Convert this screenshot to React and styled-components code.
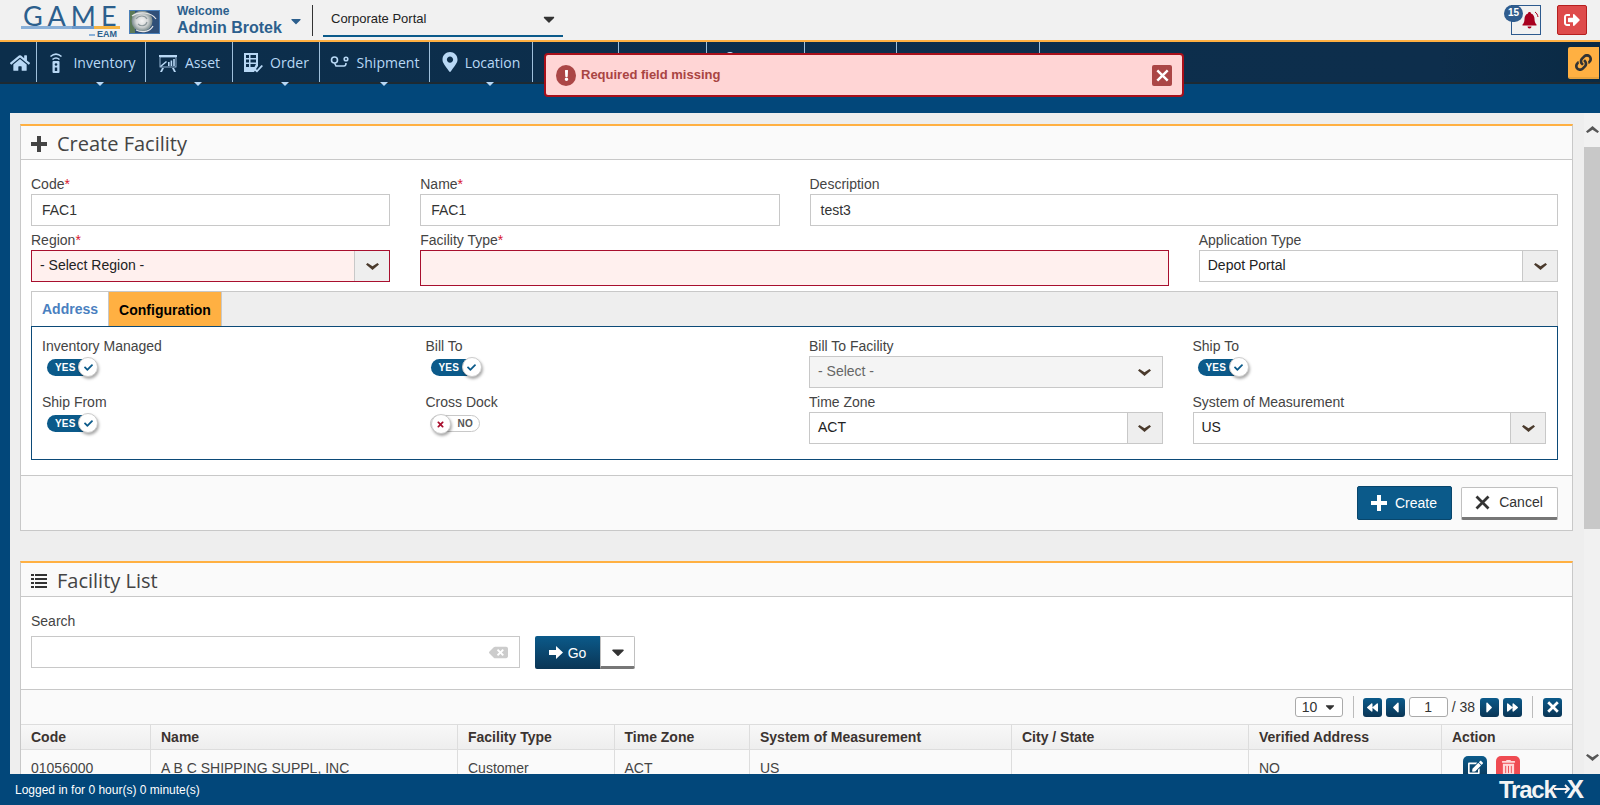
import React from 'react'
import styled, { createGlobalStyle } from 'styled-components'
import {
  FaHome, FaCaretDown, FaSignOutAlt, FaLink, FaMapMarkerAlt, FaBackspace, FaBackward, FaForward,
  FaCaretLeft, FaCaretRight, FaEdit, FaTrashAlt, FaExclamation, FaCheck, FaTimes, FaCog, FaUser, FaChartBar, FaFolder
} from 'react-icons/fa'

const Global = createGlobalStyle`
  html, body { margin: 0; padding: 0; height: 100%; overflow: hidden; }
  body { font-family: "Liberation Sans", Arial, sans-serif; font-size: 14px; color: #444; }
  * { box-sizing: border-box; }
`

const Page = styled.div`
  position: relative;
  height: 100vh;
  display: flex;
  flex-direction: column;
  overflow: hidden;
  background: #eee;
`

const TopBar = styled.header`
  height: 42px;
  flex: none;
  display: flex;
  align-items: flex-start;
  background: #f1f1f1;
  border-bottom: 2px solid #ffb042;
`

const Logo = styled.div`
  width: 103px;
  margin: 3px 0 0 21px;
  flex: none;
`

const LogoWord = styled.div`
  font-family: Lato, sans-serif;
  font-size: 27px;
  line-height: 21px;
  height: 23px;
  padding: 2px 0 0 2px;
  letter-spacing: 5px;
  color: #2c5f8d;
  white-space: nowrap;
`

const LogoRule = styled.div`
  height: 3px;
  width: 99px;
  background: linear-gradient(90deg, #8ab0d8 0 52%, #6f9bcc 52% 74%, #f5b342 74% 100%);
`

const LogoSub = styled.div`
  display: flex;
  align-items: center;
  justify-content: flex-end;
  gap: 2px;
  font-size: 9px;
  line-height: 9px;
  font-weight: 700;
  color: #2c5f8d;
  margin-top: 1px;
  padding-right: 7px;
  &::before {
    content: '';
    width: 6px;
    height: 2px;
    background: #8ab0d8;
  }
`

const StormPic = styled.svg`
  width: 31px;
  height: 24px;
  margin: 10px 0 0 5px;
  flex: none;
  border: 1px solid #4a7fb8;
`

const Welcome = styled.div`
  margin: 4px 0 0 17px;
  width: 104px;
  flex: none;
  color: #2c5f8d;
  font-weight: 700;
`

const WelcomeSmall = styled.div`
  font-size: 12px;
  line-height: 14px;
`

const WelcomeName = styled.div`
  font-size: 16px;
  line-height: 19px;
  white-space: nowrap;
`

const TinyCaret = styled(FaCaretDown)`
  flex: none;
  margin: 13px 0 0 7px;
  font-size: 16px;
  color: #2c5f8d;
`

const TopDivider = styled.div`
  width: 1px;
  height: 31px;
  margin: 5px 0 0 8px;
  flex: none;
  background: #333;
`

const PortalSelect = styled.div`
  width: 240px;
  height: 32px;
  margin: 5px 0 0 10px;
  flex: none;
  display: flex;
  align-items: center;
  justify-content: space-between;
  padding: 0 5px 3px 8px;
  font-size: 13px;
  color: #222;
  border-bottom: 2px solid #0b5a8a;
`

const TopRight = styled.div`
  margin-left: auto;
  margin-right: 13px;
  display: flex;
  gap: 16px;
  padding-top: 5px;
`

const BellBox = styled.div`
  position: relative;
  width: 30px;
  height: 30px;
  display: flex;
  align-items: center;
  justify-content: center;
  border: 1px solid #2d5a8e;
  color: #a8001f;
  padding-left: 6px;
`

const BellBadge = styled.span`
  position: absolute;
  left: -8px;
  top: -1px;
  width: 19px;
  height: 17px;
  border-radius: 9px;
  background: #2f5c8e;
  color: #fff;
  font-size: 10px;
  font-weight: 700;
  line-height: 16px;
  text-align: center;
`

const LogoutBtn = styled.div`
  width: 30px;
  height: 30px;
  display: flex;
  align-items: center;
  justify-content: center;
  background: #de4b4b;
  border: 1px solid #b51f1f;
  border-radius: 2px;
  color: #fff;
  font-size: 16px;
`

const Nav = styled.nav`
  height: 42px;
  flex: none;
  display: flex;
  background: linear-gradient(90deg, #0c2e4b 0%, #0d2e4c 90%, #0a2a44 100%);
  border-bottom: 2px solid #1d2a33;
`

const NavItem = styled.div`
  position: relative;
  width: ${p => p.$w}px;
  flex: none;
  display: flex;
  align-items: flex-start;
  justify-content: ${p => (p.$left ? 'flex-start' : 'center')};
  gap: 7px;
  padding: ${p => (p.$left ? '10px 0 0 13px' : p.$home ? '10px 0 0 4px' : '10px 0 0')};
  border-right: 1px solid #9fc0dc;
  font-family: "Open Sans", sans-serif;
  font-size: 14px;
  line-height: 22px;
  color: #b8d8f5;
  svg { flex: none; height: 22px; width: 20px; }
`

const PinIcon = styled(FaMapMarkerAlt)`
  && { height: 20px; width: 16px; }
`

const NavCaret = styled.span`
  position: absolute;
  left: calc(50% + 5px);
  top: 40px;
  border-left: 4px solid transparent;
  border-right: 4px solid transparent;
  border-top: 4px solid #b8d8f5;
`

const LinkBtn = styled.div`
  margin: 5px 1px 0 auto;
  width: 31px;
  height: 32px;
  display: flex;
  align-items: center;
  justify-content: center;
  background: #ffb042;
  border-bottom: 2px solid #e8a23c;
  border-radius: 2px 0 0 2px;
  color: #333;
  font-size: 17px;
`

const Band = styled.div`
  height: 29px;
  flex: none;
  padding-left: 738px;
  background: #02477a;
`

const BandNotch = styled.div`
  width: 52px;
  height: 1px;
  margin-top: 12px;
  background: #a85a10;
`

const Toast = styled.div`
  position: absolute;
  left: 544px;
  top: 53px;
  width: 640px;
  height: 44px;
  display: flex;
  align-items: center;
  gap: 5px;
  padding: 0 10px;
  background: #ffd5d5;
  border: 2px solid #a80f1a;
  border-radius: 4px;
  color: #a94442;
  font-size: 13px;
  font-weight: 700;
`

const ToastText = styled.span`
  margin-top: -2px;
`

const ToastIcon = styled.span`
  width: 20px;
  height: 21px;
  display: flex;
  align-items: center;
  justify-content: center;
  border-radius: 50%;
  background: #ab4646;
  color: #fff;
  font-size: 11px;
`

const ToastClose = styled.span`
  margin-left: auto;
  width: 20px;
  height: 21px;
  display: flex;
  align-items: center;
  justify-content: center;
  border-radius: 2px;
  background: #ab4646;
  color: #fff;
`

const Main = styled.main`
  flex: 1;
  min-height: 0;
  display: flex;
  border-left: 10px solid #02477a;
`

const Scroller = styled.div`
  flex: 1;
  min-width: 0;
  padding: 11px 11px 0 10px;
  overflow: hidden;
`

const Scrollbar = styled.div`
  width: 16px;
  flex: none;
  display: flex;
  flex-direction: column;
  align-items: center;
  background: #f1f1f1;
  color: #555;
`

const ScrollArrow = styled.div`
  height: 34px;
  display: flex;
  align-items: center;
  justify-content: center;
  transform: ${p => (p.$up ? 'rotate(180deg)' : 'none')};
`

const ScrollThumb = styled.div`
  width: 16px;
  height: 382px;
  background: #c8c8c8;
  margin-bottom: auto;
`

const Panel = styled.section`
  background: #fff;
  border: 1px solid #c8c8c8;
  border-top: 2px solid #ffb042;
  margin-bottom: 30px;
`

const PanelHead = styled.div`
  height: 34px;
  display: flex;
  align-items: center;
  gap: 10px;
  padding: 2px 0 0 10px;
  background: #fafafa;
  border-bottom: 1px solid #c8c8c8;
  font-family: "Open Sans", sans-serif;
  font-size: 20px;
  color: #444;
`

const FormBody = styled.div`
  padding: 15px 14px 15px 10px;
`

const Grid = styled.div`
  display: grid;
  grid-template-columns: repeat(4, 1fr);
  column-gap: 30px;
  row-gap: 5px;
`

const Field = styled.div`
  grid-column: span ${p => p.$span || 1};
  min-width: 0;
`

const Label = styled.div`
  height: 19px;
  line-height: 18px;
  font-size: 14px;
  color: #444;
  white-space: nowrap;
`

const Req = styled.span`
  color: #d8172e;
`

const TextBox = styled.div`
  height: ${p => p.$h || 32}px;
  display: flex;
  align-items: center;
  padding-left: 10px;
  font-size: 14px;
  color: #333;
  background: ${p => (p.$error ? '#fff0ee' : '#fff')};
  border: 1px solid ${p => (p.$error ? '#a80f2e' : '#c8c8c8')};
`

const SelectBox = styled.div`
  height: 32px;
  display: flex;
  align-items: stretch;
  font-size: 14px;
  color: ${p => (p.$disabled ? '#666' : '#222')};
  background: ${p => (p.$error ? '#fff0ee' : p.$disabled ? '#f4f4f4' : '#fff')};
  border: 1px solid ${p => (p.$error ? '#a80f2e' : '#c8c8c8')};
`

const SelectValue = styled.div`
  flex: 1;
  display: flex;
  align-items: center;
  padding: 0 0 2px ${p => p.$pad || 8}px;
`

const SelectArrow = styled.div`
  width: 35px;
  flex: none;
  display: flex;
  align-items: center;
  justify-content: center;
  color: #4a3a2c;
  background: ${p => (p.$plain ? 'transparent' : '#eee')};
  border-left: ${p => (p.$plain ? 'none' : '1px solid #c8c8c8')};
`

const TabStrip = styled.div`
  margin-top: 5px;
  height: 35px;
  display: flex;
  background: #eee;
  border: 1px solid #c8c8c8;
  border-bottom: none;
`

const Tab = styled.div`
  width: ${p => p.$w}px;
  display: flex;
  align-items: center;
  justify-content: center;
  padding-top: ${p => (p.$active ? 2 : 0)}px;
  font-weight: 700;
  font-size: 14px;
  color: ${p => (p.$active ? '#000' : '#4a80c0')};
  background: ${p => (p.$active ? '#ffb042' : '#fff')};
  border-right: 1px solid #c8c8c8;
`

const TabBody = styled.div`
  padding: 10px 11px 15px 10px;
  border: 1px solid #0c4a78;
`

const Toggle = styled.div`
  position: relative;
  width: ${p => (p.$on ? 46 : 50)}px;
  height: 17px;
  margin: 3px 0 0 ${p => (p.$on ? 5 : 4)}px;
  display: flex;
  align-items: center;
  padding: ${p => (p.$on ? '0 0 0 8px' : '0 0 0 27px')};
  border-radius: 9px;
  background: ${p => (p.$on ? '#0b5a8a' : '#fff')};
  border: ${p => (p.$on ? 'none' : '1px solid #c8c8c8')};
  color: ${p => (p.$on ? '#fff' : '#555')};
  font-size: 10px;
  font-weight: 700;
  letter-spacing: 0.2px;
`

const ToggleKnob = styled.span`
  position: absolute;
  top: -2px;
  ${p => (p.$on ? 'right: -5px;' : 'left: 0;')}
  width: 20px;
  height: 20px;
  display: flex;
  align-items: center;
  justify-content: center;
  border-radius: 50%;
  background: #fff;
  border: 1px solid #ccc;
  box-shadow: 1px 2px 3px rgba(0, 0, 0, 0.35);
  font-size: 9px;
  color: ${p => (p.$on ? '#0b5a8a' : '#a80f2e')};
`

const PanelFoot = styled.div`
  height: 55px;
  display: flex;
  align-items: center;
  justify-content: flex-end;
  gap: 9px;
  padding-right: 14px;
  background: #fafafa;
  border-top: 1px solid #c8c8c8;
`

const PrimaryBtn = styled.div`
  width: 95px;
  height: 34px;
  display: flex;
  align-items: center;
  justify-content: center;
  gap: 8px;
  padding-right: 1px;
  background: #0b5a8a;
  border: 1px solid #08466c;
  border-radius: 2px;
  color: #fff;
  font-size: 14px;
`

const CancelBtn = styled.div`
  width: 97px;
  height: 33px;
  display: flex;
  align-items: center;
  justify-content: center;
  gap: 9px;
  padding-right: 1px;
  background: #fff;
  border: 1px solid #c0c0c0;
  border-bottom: 3px solid #777;
  border-radius: 2px;
  color: #333;
  font-size: 14px;
`

const SearchBody = styled.div`
  height: 93px;
  padding: 15px 0 0 10px;
  border-bottom: 1px solid #c8c8c8;
`

const SearchLabel = styled(Label)`
  height: 24px;
`

const SearchRow = styled.div`
  display: flex;
  gap: 15px;
`

const SearchBox = styled.div`
  width: 489px;
  height: 32px;
  display: flex;
  align-items: center;
  justify-content: flex-end;
  padding-right: 11px;
  border: 1px solid #c8c8c8;
  color: #ccc;
  font-size: 19px;
`

const GoGroup = styled.div`
  display: flex;
  height: 33px;
  border-radius: 2px;
  overflow: hidden;
`

const GoBtn = styled.div`
  width: 65px;
  display: flex;
  align-items: center;
  justify-content: center;
  gap: 5px;
  background: linear-gradient(180deg, #0b5a8a 0%, #0a3555 100%);
  color: #fff;
  font-size: 14px;
`

const GoCaret = styled.div`
  width: 35px;
  display: flex;
  align-items: center;
  justify-content: center;
  background: #fff;
  border: 1px solid #c0c0c0;
  border-bottom: 3px solid #777;
  color: #333;
  font-size: 20px;
`

const Pager = styled.div`
  height: 34px;
  display: flex;
  align-items: center;
  justify-content: flex-end;
  padding-right: 10px;
  background: #fafafa;
`

const PageSize = styled.div`
  width: 48px;
  height: 20px;
  display: flex;
  align-items: center;
  justify-content: space-between;
  padding: 0 5px 0 6px;
  background: #fff;
  border: 1px solid #aaa;
  border-radius: 3px;
  font-size: 14px;
  color: #333;
`

const PagerRule = styled.div`
  width: 1px;
  height: 22px;
  margin: ${p => p.$m || '0 9px 0 10px'};
  background: #bbb;
`

const PagerBtn = styled.div`
  width: 19px;
  height: 19px;
  margin-right: ${p => p.$mr ?? 4}px;
  display: flex;
  align-items: center;
  justify-content: center;
  background: linear-gradient(180deg, #0b5a8a 0%, #0a3555 100%);
  border-radius: 3px;
  color: #fff;
  font-size: ${p => p.$fs || 11}px;
`

const PageInput = styled.div`
  width: 39px;
  height: 20px;
  margin-right: 4px;
  line-height: 18px;
  text-align: center;
  background: #fff;
  border: 1px solid #aaa;
  border-radius: 3px;
  font-size: 14px;
  color: #333;
`

const PageTotal = styled.span`
  margin-right: 5px;
  font-size: 14px;
  color: #333;
`

const TableRow = styled.div`
  display: grid;
  grid-template-columns: 130px 307px 156.5px 135.5px 262px 237px 193px 1fr;
  height: ${p => (p.$head ? 26 : 36)}px;
  background: ${p => (p.$head ? 'linear-gradient(180deg, #f8f8f8, #eee)' : '#fafafa')};
  border-top: ${p => (p.$head ? '1px solid #ddd' : 'none')};
  border-bottom: 1px solid #ddd;
`

const Cell = styled.div`
  display: flex;
  align-items: center;
  gap: 9px;
  padding-left: ${p => p.$pad || 10}px;
  font-size: 14px;
  font-weight: ${p => (p.$head ? 700 : 400)};
  color: ${p => (p.$head ? '#3b3330' : '#444')};
  border-right: 1px solid #ddd;
  white-space: nowrap;
  &:last-child { border-right: none; }
`

const RowBtn = styled.div`
  width: 24px;
  height: 24px;
  display: flex;
  align-items: center;
  justify-content: center;
  border-radius: 5px;
  font-size: 15px;
  color: ${p => (p.$danger ? '#ffd8d8' : '#fff')};
  background: ${p => (p.$danger ? '#ef4b52' : 'linear-gradient(180deg, #0b5a8a, #0a3555)')};
`

const Footer = styled.footer`
  height: 31px;
  flex: none;
  display: flex;
  align-items: center;
  justify-content: space-between;
  padding: 0 16px 0 15px;
  background: #02477a;
  color: #fff;
  font-size: 12px;
`

const TrackLogo = styled.div`
  display: flex;
  align-items: center;
  font-size: 24px;
  font-weight: 700;
  letter-spacing: -1.2px;
  color: #f4f4f4;
`

const TrackX = styled.span`
  position: relative;
  margin-left: 11px;
  font-size: 26px;
  letter-spacing: 0;
`

const TrackArrow = styled.svg`
  position: absolute;
  left: -13px;
  top: 10px;
  width: 17px;
  height: 10px;
`

const Chevron = () => (
  <svg width="13" height="7" viewBox="0 0 13 7" fill="currentColor">
    <path d="M0 1.500L1.500 0l5 3.200L11.500 0 13 1.500 6.500 7z" />
  </svg>
)

const Plus = ({ size = 16 }) => (
  <svg width={size} height={size} viewBox="0 0 16 16" fill="currentColor">
    <path d="M6 0h4v6h6v4h-6v6H6v-6H0V6h6z" />
  </svg>
)

const Cross = ({ size = 15, weight = 2.8 }) => (
  <svg width={size} height={size} viewBox="0 0 15 15" fill="none" stroke="currentColor" strokeWidth={weight}>
    <path d="M1.500 1.500l12 12M13.500 1.500l-12 12" />
  </svg>
)

const BlockArrow = () => (
  <svg width="14" height="13" viewBox="0 0 14 13" fill="currentColor">
    <path d="M0 4h7V0l7 6.500L7 13V9H0z" />
  </svg>
)

const ListIcon = () => (
  <svg width="16" height="14" viewBox="0 0 16 14" fill="#333">
    <path d="M0 0h3v2H0zM4 0h12v2H4zM0 4h3v2H0zM4 4h12v2H4zM0 8h3v2H0zM4 8h12v2H4zM0 12h3v2H0zM4 12h12v2H4z" />
  </svg>
)

const BellIcon = () => (
  <svg width="21" height="20" viewBox="0 0 21 20">
    <path fill="currentColor" d="M10.500 2c-.9 0-1.500.6-1.500 1.400C6.500 4.200 5.500 6.500 5.500 9c0 3-1 4.500-2 5.500v1h14v-1c-1-1-2-2.500-2-5.500 0-2.500-1-4.800-3.500-5.600C12 2.600 11.400 2 10.500 2zM8.500 16.500a2 2 0 004 0z" />
    <path fill="none" stroke="currentColor" d="M16 2c1.500 1 2.500 2.500 3 5" />
  </svg>
)

const InventoryIcon = () => (
  <svg viewBox="0 0 20 22" fill="none" stroke="currentColor">
    <path d="M4.500 4.500C8 1.500 12 1.500 15.500 4.500" strokeWidth="1.600" />
    <path d="M6.500 7.500C8.500 5.800 11.500 5.800 13.500 7.500" strokeWidth="1.600" />
    <rect x="6.500" y="9" width="7" height="12" rx="1" fill="currentColor" stroke="none" />
    <circle cx="10" cy="12.500" r="1.300" fill="#0d2e4c" stroke="none" />
    <rect x="8.800" y="15.500" width="2.400" height="3.500" fill="#0d2e4c" stroke="none" />
  </svg>
)

const AssetIcon = () => (
  <svg viewBox="0 0 20 22" fill="currentColor">
    <rect x="1" y="3" width="18" height="2" />
    <rect x="2" y="5" width="16" height="10" fill="none" stroke="currentColor" strokeWidth="0.8" />
    <rect x="10" y="10" width="1.600" height="4" />
    <rect x="12.600" y="8.500" width="1.600" height="5.500" />
    <rect x="15.200" y="7" width="1.600" height="7" />
    <path d="M2 14L8 9l1 1-6 5zM4 16h2l-2 4H2zM14 16h2l2 4h-2z" />
  </svg>
)

const OrderIcon = () => (
  <svg viewBox="0 0 20 22" fill="currentColor">
    <path d="M1 1h14v13l-4 6H1zM3 3v3h3V3zm4.500 0v3H13V3zM3 7.500v3h3v-3zm4.500 0v3H13v-3zM3 12v3h3v-3zm4.500 0v3h4l1.500-3z" fillRule="evenodd" />
    <path d="M11 18l1.500-1.500 1.500 1.500 4.500-5 1.500 1-6 6.500z" />
  </svg>
)

const ShipmentIcon = () => (
  <svg viewBox="0 0 20 22" fill="none" stroke="currentColor" strokeWidth="1.600">
    <circle cx="4.500" cy="8" r="3" />
    <path d="M4.500 11l1.500 3h8c1.500 0 2-1 2-3" />
    <circle cx="16" cy="7" r="1.800" />
  </svg>
)

const StormImage = () => (
  <StormPic viewBox="0 0 29 22">
    <defs>
      <radialGradient id="storm" cx="50%" cy="50%">
        <stop offset="0%" stopColor="#f4f4f4" />
        <stop offset="55%" stopColor="#d6d8d8" />
        <stop offset="100%" stopColor="#77888a" />
      </radialGradient>
    </defs>
    <rect width="29" height="22" fill="#2f4f78" />
    <rect width="5" height="22" fill="#5c7a56" />
    <circle cx="12" cy="10" r="10.500" fill="url(#storm)" />
    <path d="M6 8c3-4 9-4 11 0M8 13c3 3 8 2 9-2" fill="none" stroke="#8e9a9e" strokeWidth="1.200" />
    <path d="M2 5C9 0 21 1 26 8M6 19c6 3 14 2 17-4" fill="none" stroke="#e6e6e6" strokeWidth="1.200" />
  </StormPic>
)

const navItems = [
  { label: 'Inventory', w: 109, icon: <InventoryIcon /> },
  { label: 'Asset', w: 87, icon: <AssetIcon /> },
  { label: 'Order', w: 87, icon: <OrderIcon /> },
  { label: 'Shipment', w: 110, icon: <ShipmentIcon /> },
  { label: 'Location', w: 103, icon: <PinIcon /> }
]

// mostly hidden behind the toast, only the tips of the icons show
const hiddenNav = [
  { w: 86, icon: <FaChartBar /> },
  { w: 88, icon: <FaCog /> },
  { w: 98, icon: <FaUser /> },
  { w: 92, icon: <FaFolder /> },
  { w: 143, icon: null }
]

const tableHead = ['Code', 'Name', 'Facility Type', 'Time Zone', 'System of Measurement', 'City / State', 'Verified Address', 'Action']
const tableRow = ['01056000', 'A B C SHIPPING SUPPL, INC', 'Customer', 'ACT', 'US', '', 'NO']

const Switch = ({ on }) => (
  <Toggle $on={on}>
    {on ? 'YES' : 'NO'}
    <ToggleKnob $on={on}>{on ? <FaCheck /> : <FaTimes />}</ToggleKnob>
  </Toggle>
)

const Select = ({ value, error, pad }) => (
  <SelectBox $error={error}>
    <SelectValue $pad={pad}>{value}</SelectValue>
    <SelectArrow><Chevron /></SelectArrow>
  </SelectBox>
)

export default function App() {
  return (
    <Page>
      <Global />
      <TopBar>
        <Logo>
          <LogoWord>GAME</LogoWord>
          <LogoRule />
          <LogoSub>EAM</LogoSub>
        </Logo>
        <StormImage />
        <Welcome>
          <WelcomeSmall>Welcome</WelcomeSmall>
          <WelcomeName>Admin Brotek</WelcomeName>
        </Welcome>
        <TinyCaret />
        <TopDivider />
        <PortalSelect>
          Corporate Portal
          <FaCaretDown color="#333" size={18} />
        </PortalSelect>
        <TopRight>
          <BellBox>
            <BellBadge>15</BellBadge>
            <BellIcon />
          </BellBox>
          <LogoutBtn><FaSignOutAlt /></LogoutBtn>
        </TopRight>
      </TopBar>

      <Nav>
        <NavItem $w={37} $home><FaHome /></NavItem>
        {navItems.map(item => (
          <NavItem key={item.label} $w={item.w}>
            {item.icon}
            {item.label}
            <NavCaret />
          </NavItem>
        ))}
        {hiddenNav.map((item, i) => (
          <NavItem key={i} $w={item.w} $left>{item.icon}</NavItem>
        ))}
        <LinkBtn><FaLink /></LinkBtn>
      </Nav>

      <Band><BandNotch /></Band>

      <Toast>
        <ToastIcon><FaExclamation /></ToastIcon>
        <ToastText>Required field missing</ToastText>
        <ToastClose><Cross size={13} /></ToastClose>
      </Toast>

      <Main>
        <Scroller>
          <Panel>
            <PanelHead><Plus />Create Facility</PanelHead>
            <FormBody>
              <Grid>
                <Field>
                  <Label>Code<Req>*</Req></Label>
                  <TextBox>FAC1</TextBox>
                </Field>
                <Field>
                  <Label>Name<Req>*</Req></Label>
                  <TextBox>FAC1</TextBox>
                </Field>
                <Field $span={2}>
                  <Label>Description</Label>
                  <TextBox>test3</TextBox>
                </Field>
                <Field>
                  <Label>Region<Req>*</Req></Label>
                  <Select value="- Select Region -" error />
                </Field>
                <Field $span={2}>
                  <Label>Facility Type<Req>*</Req></Label>
                  <TextBox $error $h={36} />
                </Field>
                <Field>
                  <Label>Application Type</Label>
                  <Select value="Depot Portal" />
                </Field>
              </Grid>

              <TabStrip>
                <Tab $w={77}>Address</Tab>
                <Tab $w={113} $active>Configuration</Tab>
              </TabStrip>
              <TabBody>
                <Grid>
                  <Field>
                    <Label>Inventory Managed</Label>
                    <Switch on />
                  </Field>
                  <Field>
                    <Label>Bill To</Label>
                    <Switch on />
                  </Field>
                  <Field>
                    <Label>Bill To Facility</Label>
                    <SelectBox $disabled>
                      <SelectValue>- Select -</SelectValue>
                      <SelectArrow $plain><Chevron /></SelectArrow>
                    </SelectBox>
                  </Field>
                  <Field>
                    <Label>Ship To</Label>
                    <Switch on />
                  </Field>
                  <Field>
                    <Label>Ship From</Label>
                    <Switch on />
                  </Field>
                  <Field>
                    <Label>Cross Dock</Label>
                    <Switch on={false} />
                  </Field>
                  <Field>
                    <Label>Time Zone</Label>
                    <Select value="ACT" />
                  </Field>
                  <Field>
                    <Label>System of Measurement</Label>
                    <Select value="US" />
                  </Field>
                </Grid>
              </TabBody>
            </FormBody>
            <PanelFoot>
              <PrimaryBtn><Plus />Create</PrimaryBtn>
              <CancelBtn><Cross />Cancel</CancelBtn>
            </PanelFoot>
          </Panel>

          <Panel>
            <PanelHead><ListIcon />Facility List</PanelHead>
            <SearchBody>
              <SearchLabel>Search</SearchLabel>
              <SearchRow>
                <SearchBox><FaBackspace /></SearchBox>
                <GoGroup>
                  <GoBtn><BlockArrow />Go</GoBtn>
                  <GoCaret><FaCaretDown /></GoCaret>
                </GoGroup>
              </SearchRow>
            </SearchBody>
            <Pager>
              <PageSize>10<FaCaretDown color="#333" /></PageSize>
              <PagerRule />
              <PagerBtn><FaBackward /></PagerBtn>
              <PagerBtn $fs={17}><FaCaretLeft /></PagerBtn>
              <PageInput>1</PageInput>
              <PageTotal>/ 38</PageTotal>
              <PagerBtn $fs={17}><FaCaretRight /></PagerBtn>
              <PagerBtn $mr={0}><FaForward /></PagerBtn>
              <PagerRule $m="0 10px" />
              <PagerBtn $mr={0}><Cross size={12} weight={3.4} /></PagerBtn>
            </Pager>
            <TableRow $head>
              {tableHead.map(h => <Cell key={h} $head>{h}</Cell>)}
            </TableRow>
            <TableRow>
              {tableRow.map((c, i) => <Cell key={i}>{c}</Cell>)}
              <Cell $pad={21}>
                <RowBtn><FaEdit /></RowBtn>
                <RowBtn $danger><FaTrashAlt /></RowBtn>
              </Cell>
            </TableRow>
          </Panel>
        </Scroller>
        <Scrollbar>
          <ScrollArrow $up><Chevron /></ScrollArrow>
          <ScrollThumb />
          <ScrollArrow><Chevron /></ScrollArrow>
        </Scrollbar>
      </Main>

      <Footer>
        Logged in for 0 hour(s) 0 minute(s)
        <TrackLogo>
          Track
          <TrackX>
            <TrackArrow viewBox="0 0 17 10" fill="none" stroke="#f4f4f4" strokeWidth="1.800">
              <path d="M0 5h15M11 1l4 4-4 4" />
            </TrackArrow>
            X
          </TrackX>
        </TrackLogo>
      </Footer>
    </Page>
  )
}
